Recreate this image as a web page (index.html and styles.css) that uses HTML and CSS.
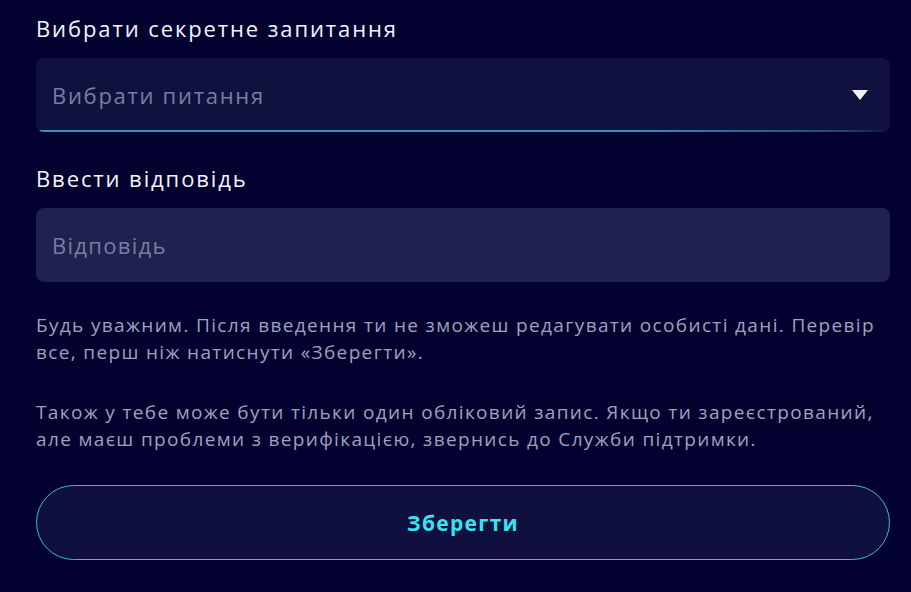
FILE: index.html
```html
<!DOCTYPE html>
<html lang="uk">
<head>
    <meta charset="UTF-8" />
    <title>Секретне запитання</title>
    <link rel="stylesheet" href="styles.css">
</head>
<body>
    <form class="secret-form">
        <label class="field-label" for="question">Вибрати секретне запитання</label>
        <div class="select-box" id="question">
            <span class="placeholder">Вибрати питання</span>
            <span class="arrow"></span>
        </div>

        <label class="field-label" for="answer">Ввести відповідь</label>
        <input class="text-input" type="text" id="answer" placeholder="Відповідь">

        <p class="note">Будь уважним. Після введення ти не зможеш редагувати особисті дані. Перевір все, перш ніж натиснути «Зберегти».</p>
        <p class="note">Також у тебе може бути тільки один обліковий запис. Якщо ти зареєстрований, але маєш проблеми з верифікацією, звернись до Служби підтримки.</p>

        <button type="submit" class="save-btn">Зберегти</button>
    </form>
</body>
</html>
```

FILE: styles.css
```css
body {
    margin: 0;
    background: #03012f;
    font-family: 'Open Sans', 'Noto Sans', sans-serif;
    color: #fff;
}
.secret-form {
    padding: 14px 21px 0 36px;
}
.field-label {
    display: block;
    font-size: 22px;
    line-height: 28px;
    letter-spacing: 1.9px;
    margin-bottom: 16px;
    color: #f4f4fa;
}
.select-box {
    position: relative;
    display: flex;
    align-items: center;
    justify-content: space-between;
    height: 74px;
    box-sizing: border-box;
    padding: 0 22px 0 16px;
    background: #10113f;
    border-radius: 8px;
    margin-bottom: 32px;
    overflow: hidden;
}
.select-box::after {
    content: "";
    position: absolute;
    left: 0;
    right: 0;
    bottom: 0;
    height: 2px;
    background: linear-gradient(to right, #3c8fb8, #3c8fb8 70%, rgba(60,143,184,0.4) 95%, rgba(60,143,184,0));
}
.placeholder {
    font-size: 22px;
    letter-spacing: 1.7px;
    color: #7b7d9f;
}
.arrow {
    width: 0;
    height: 0;
    border-left: 8px solid transparent;
    border-right: 8px solid transparent;
    border-top: 10px solid #f2f2f6;
}
.text-input {
    display: block;
    width: 100%;
    height: 74px;
    box-sizing: border-box;
    padding: 0 16px;
    background: #1f2151;
    border: none;
    border-radius: 8px;
    font-family: inherit;
    font-size: 22px;
    letter-spacing: 1.3px;
    color: #fff;
    margin-bottom: 30px;
    outline: none;
}
.text-input::placeholder {
    color: #7b7d9f;
}
.note {
    margin: 0 0 33px;
    font-size: 19px;
    line-height: 27px;
    letter-spacing: 1.35px;
    color: #9fa1bd;
}
.save-btn {
    display: block;
    width: 100%;
    height: 75px;
    margin-top: -1px;
    background: #0f1040;
    border: 1px solid #45b6d8;
    border-radius: 38px;
    font-family: inherit;
    font-size: 21px;
    font-weight: bold;
    letter-spacing: 1.3px;
    color: #35e5ee;
    cursor: pointer;
}
```
